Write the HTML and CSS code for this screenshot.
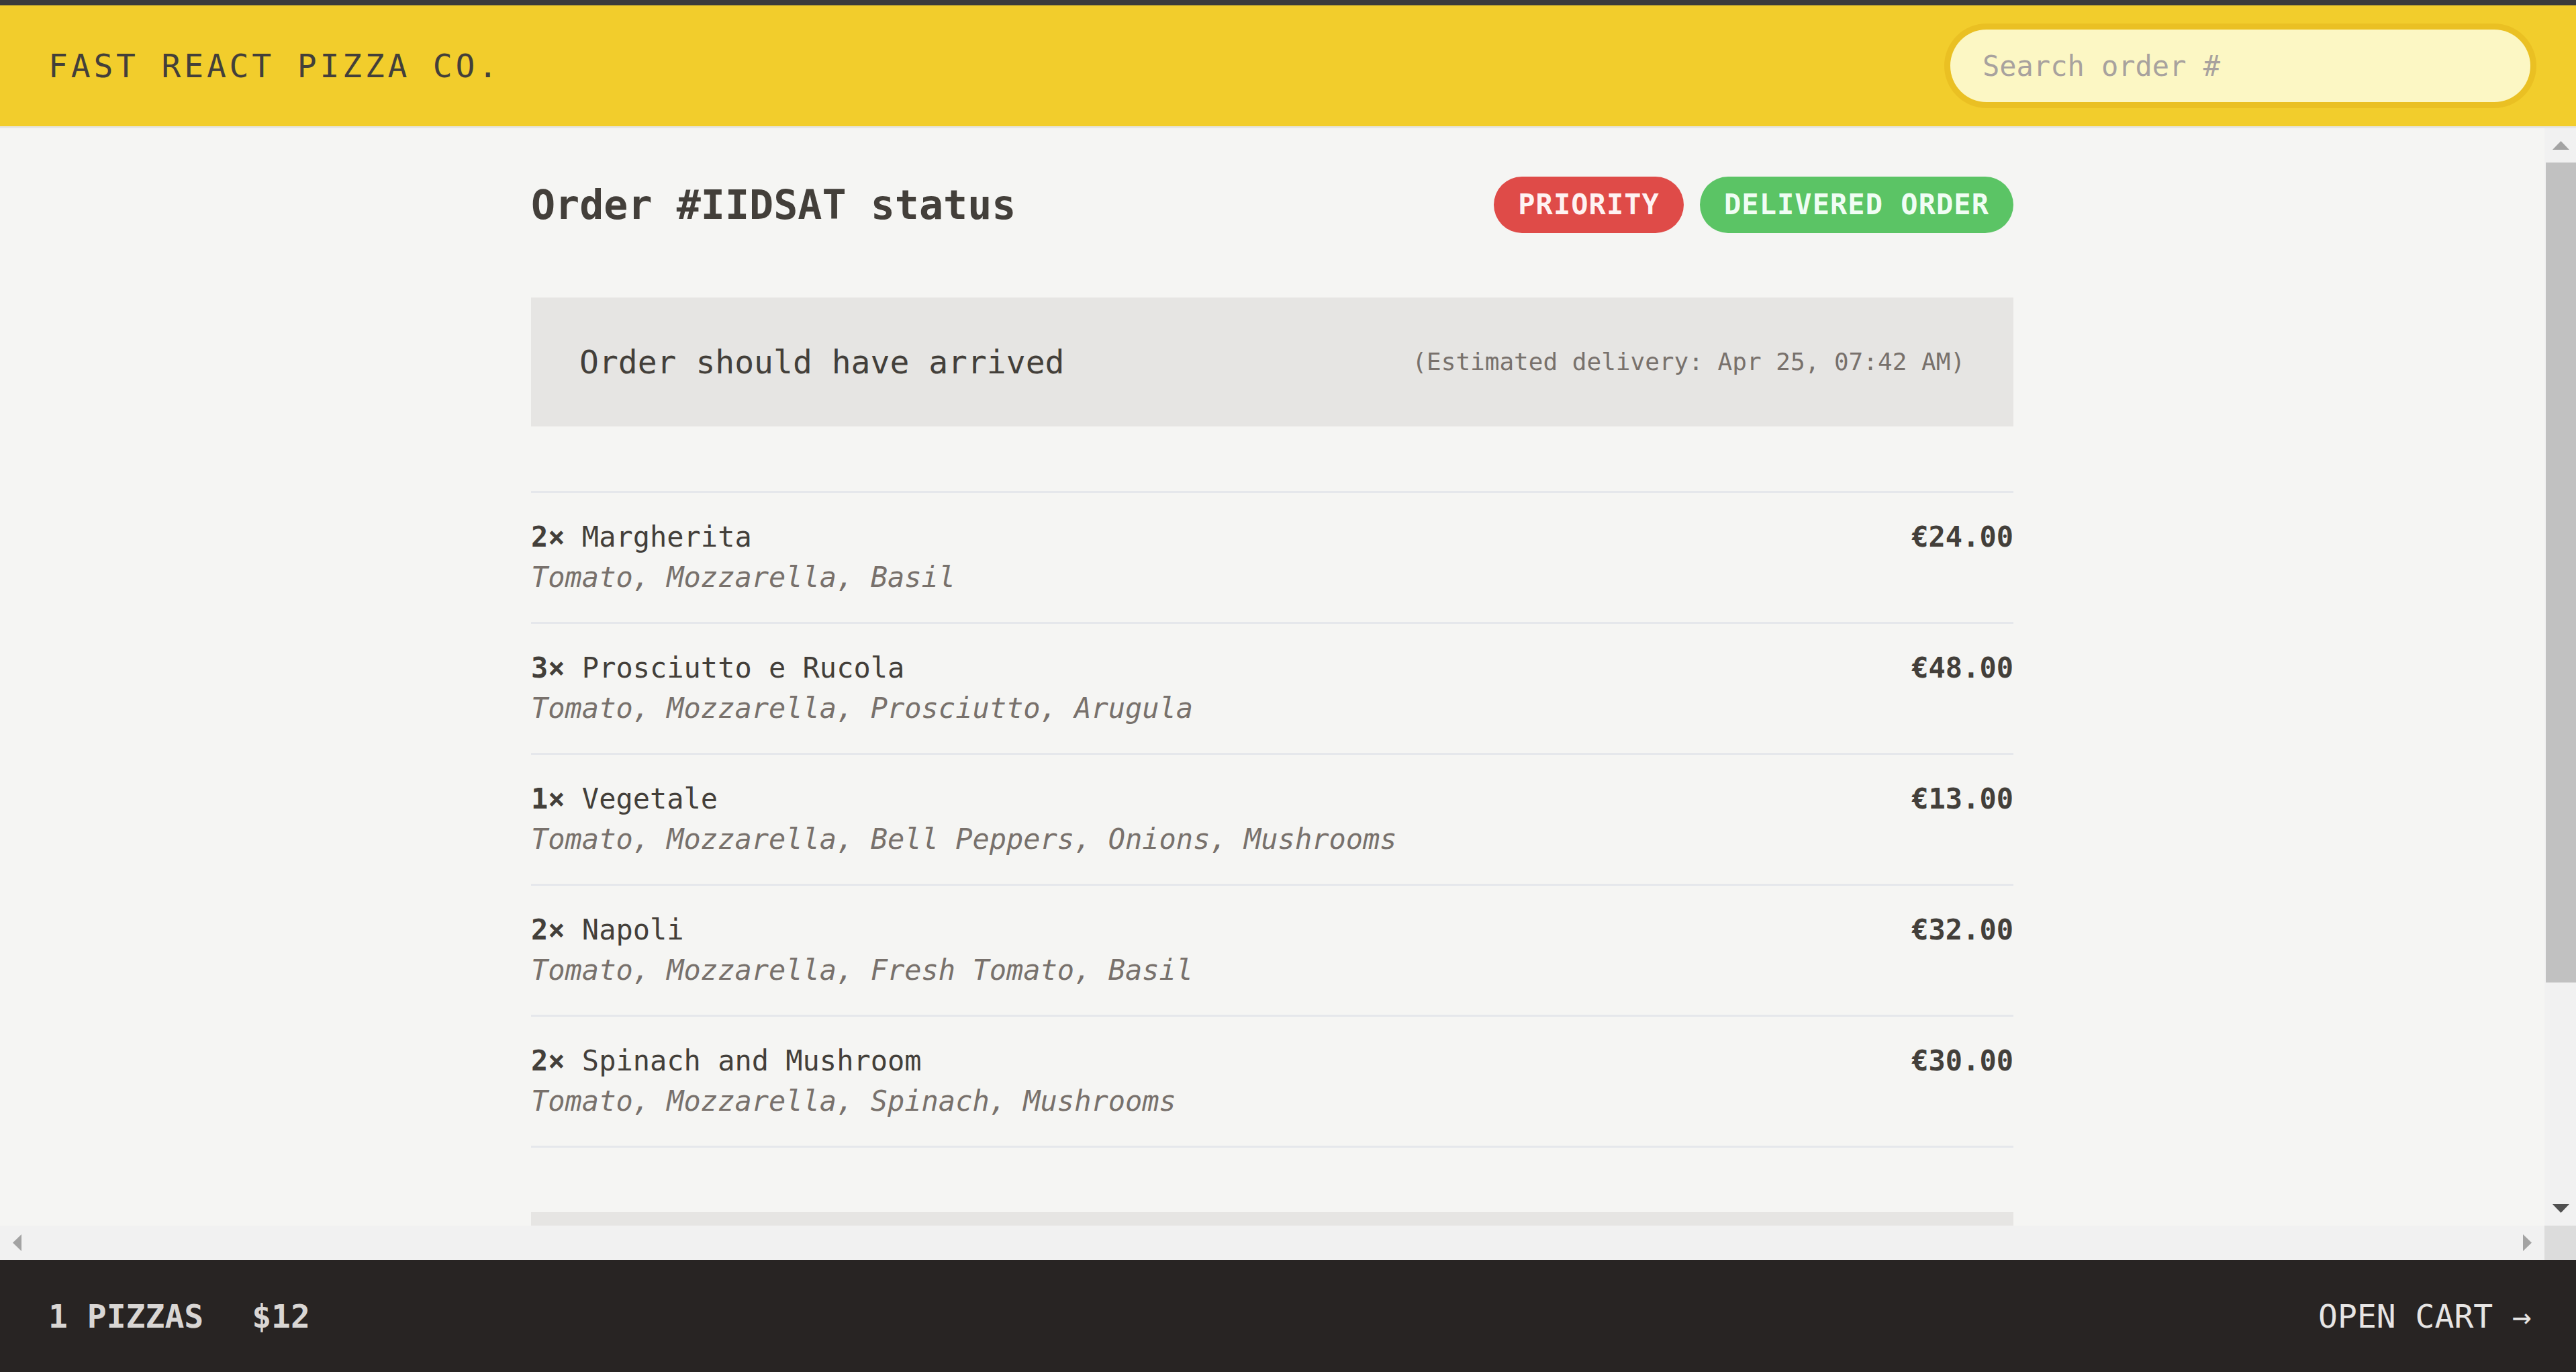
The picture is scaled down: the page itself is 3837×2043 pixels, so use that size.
FILE: index.html
```html
<!DOCTYPE html>
<html lang="en">
<head>
<meta charset="utf-8">
<title>Fast React Pizza Co.</title>
<link rel="stylesheet" href="styles.css">
</head>
<body>
<div class="app">
  <div class="topbar"></div>
  <header class="header">
    <a class="logo" href="#">Fast React Pizza Co.</a>
    <form class="search">
      <input class="search-input" type="text" placeholder="Search order #">
    </form>
  </header>
  <div class="viewport">
    <div class="scroller">
      <main class="main">
        <div class="order">
          <div class="order-head">
            <h2 class="order-title">Order #IIDSAT status</h2>
            <div class="badges">
              <span class="badge badge-red">Priority</span>
              <span class="badge badge-green">Delivered order</span>
            </div>
          </div>
          <div class="eta">
            <p class="eta-main">Order should have arrived</p>
            <p class="eta-sub">(Estimated delivery: Apr 25, 07:42 AM)</p>
          </div>
          <ul class="items">
            <li class="item">
              <div class="item-row"><p><span class="qty">2×</span> Margherita</p><p class="price">€24.00</p></div>
              <p class="ingredients">Tomato, Mozzarella, Basil</p>
            </li>
            <li class="item">
              <div class="item-row"><p><span class="qty">3×</span> Prosciutto e Rucola</p><p class="price">€48.00</p></div>
              <p class="ingredients">Tomato, Mozzarella, Prosciutto, Arugula</p>
            </li>
            <li class="item">
              <div class="item-row"><p><span class="qty">1×</span> Vegetale</p><p class="price">€13.00</p></div>
              <p class="ingredients">Tomato, Mozzarella, Bell Peppers, Onions, Mushrooms</p>
            </li>
            <li class="item">
              <div class="item-row"><p><span class="qty">2×</span> Napoli</p><p class="price">€32.00</p></div>
              <p class="ingredients">Tomato, Mozzarella, Fresh Tomato, Basil</p>
            </li>
            <li class="item">
              <div class="item-row"><p><span class="qty">2×</span> Spinach and Mushroom</p><p class="price">€30.00</p></div>
              <p class="ingredients">Tomato, Mozzarella, Spinach, Mushrooms</p>
            </li>
          </ul>
          <div class="summary"></div>
        </div>
      </main>
    </div>
    <div class="vbar">
      <div class="sb-btn">
        <svg class="sb-arrow" width="25" height="13" viewBox="0 0 25 13"><polygon points="12.5,0 25,13 0,13" fill="#a3a3a3"/></svg>
      </div>
      <div class="vthumb"></div>
      <div class="sb-fill"></div>
      <div class="sb-btn">
        <svg class="sb-arrow" width="25" height="13" viewBox="0 0 25 13"><polygon points="0,0 25,0 12.5,13" fill="#505050"/></svg>
      </div>
    </div>
    <div class="hbar">
      <div class="sb-btn sb-btn-h">
        <svg class="sb-arrow" width="13" height="25" viewBox="0 0 13 25"><polygon points="13,0 13,25 0,12.5" fill="#a3a3a3"/></svg>
      </div>
      <div class="sb-fill"></div>
      <div class="sb-btn sb-btn-h">
        <svg class="sb-arrow" width="13" height="25" viewBox="0 0 13 25"><polygon points="0,0 13,12.5 0,25" fill="#a3a3a3"/></svg>
      </div>
    </div>
    <div class="sb-corner"></div>
  </div>
  <footer class="cart">
    <p class="cart-info"><span>1 pizzas</span><span>$12</span></p>
    <a class="cart-link" href="#">Open cart &rarr;</a>
  </footer>
</div>
</body>
</html>
```

FILE: styles.css
```css
* {
  box-sizing: border-box;
}

html, body {
  margin: 0;
  padding: 0;
  height: 100%;
  overflow: hidden;
}

body {
  font-family: "DejaVu Sans Mono", "Liberation Mono", monospace;
  background: #f5f5f3;
  color: #433f3a;
}

p, h2, ul {
  margin: 0;
  padding: 0;
}

ul {
  list-style: none;
}

a {
  color: inherit;
  text-decoration: none;
}

.app {
  display: grid;
  grid-template-rows: 8px auto 1fr auto;
  height: 100vh;
}

.topbar {
  background: #3b3b3b;
}

/* Header */
.header {
  display: flex;
  align-items: center;
  justify-content: space-between;
  background: #f2cd2c;
  border-bottom: 3px solid #e6e5e3;
  padding: 36px 68px 36px 72px;
  text-transform: uppercase;
}

.logo {
  font-size: 48px;
  line-height: 72px;
  letter-spacing: 4.8px;
  color: #433f3a;
}

.search {
  margin: 0;
  display: flex;
}

.search-input {
  width: 864px;
  height: 108px;
  padding: 0 48px;
  border: none;
  border-radius: 9999px;
  background: #fcf7c4;
  font-family: inherit;
  font-size: 42px;
  line-height: 60px;
  color: #433f3a;
  outline: none;
  box-shadow: 0 0 0 9px #eac023;
}

.search-input::placeholder {
  color: #a8a29e;
}

/* Scroll viewport with classic scrollbars */
.viewport {
  display: grid;
  grid-template-columns: 1fr 47px;
  grid-template-rows: 1fr 51px;
  min-height: 0;
}

.scroller {
  overflow: hidden;
  min-height: 0;
}

.vbar {
  display: flex;
  flex-direction: column;
  background: #f1f1f1;
  min-height: 0;
}

.hbar {
  display: flex;
  background: #f1f1f1;
}

.sb-btn {
  flex: 0 0 51px;
  display: flex;
  align-items: center;
  justify-content: center;
  padding-left: 2px;
}

.sb-btn-h {
  width: 51px;
  padding-left: 0;
}

.sb-arrow {
  display: block;
}

.vthumb {
  flex: 0 0 1221px;
  margin-left: 2px;
  background: #c1c1c1;
}

.sb-fill {
  flex: 1 1 auto;
}

.sb-corner {
  background: #dcdcdc;
}

.main {
  max-width: 2304px;
  margin: 0 auto;
}

.order {
  display: flex;
  flex-direction: column;
  gap: 96px;
  padding: 72px 48px;
}

.order-head {
  display: flex;
  flex-wrap: wrap;
  align-items: center;
  justify-content: space-between;
  gap: 24px;
}

.order-title {
  font-size: 60px;
  line-height: 84px;
  font-weight: 600;
}

.badges {
  display: flex;
  gap: 24px;
}

.badge {
  border-radius: 9999px;
  padding: 12px 36px;
  font-size: 42px;
  line-height: 60px;
  font-weight: 600;
  text-transform: uppercase;
  letter-spacing: 1.05px;
}

.badge-red {
  background: #df4b48;
  color: #fef2f2;
}

.badge-green {
  background: #5bc465;
  color: #f0fdf4;
}

.eta {
  display: flex;
  flex-wrap: wrap;
  align-items: center;
  justify-content: space-between;
  gap: 24px;
  background: #e6e5e3;
  padding: 60px 72px;
}

.eta-main {
  font-size: 48px;
  line-height: 72px;
  font-weight: 500;
}

.eta-sub {
  font-size: 36px;
  line-height: 48px;
  color: #78716c;
}

.items {
  border-top: 3px solid #e5e7eb;
  border-bottom: 3px solid #e5e7eb;
}

.item {
  padding: 36px 0;
}

.item + .item {
  border-top: 3px solid #e5e7eb;
}

.item-row {
  display: flex;
  align-items: center;
  justify-content: space-between;
  gap: 48px;
  font-size: 42px;
  line-height: 60px;
}

.qty,
.price {
  font-weight: 700;
}

.ingredients {
  font-size: 42px;
  line-height: 60px;
  font-style: italic;
  color: #78716c;
}

.summary {
  height: 348px;
  background: #e6e5e3;
}

/* Footer */
.cart {
  display: flex;
  align-items: center;
  justify-content: space-between;
  background: #282423;
  padding: 48px 66px 47px 72px;
  font-size: 48px;
  line-height: 72px;
  text-transform: uppercase;
  color: #e7e5e4;
}

.cart-info {
  display: flex;
  gap: 72px;
  font-weight: 600;
  color: #d9d6d4;
}
```
